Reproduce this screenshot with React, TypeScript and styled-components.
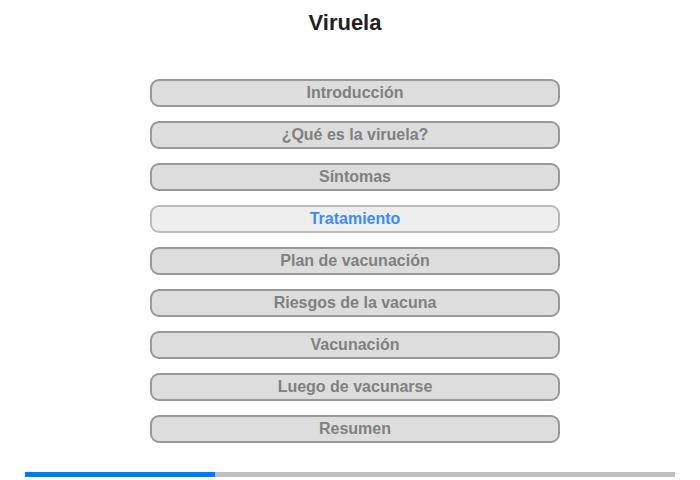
import React from 'react'
import styled, { createGlobalStyle } from 'styled-components'

const GlobalStyle = createGlobalStyle`
  html, body {
    margin: 0;
    padding: 0;
    background: #fff;
    font-family: "Liberation Sans", Arial, sans-serif;
  }
`

const sections = [
  'Introducción',
  '¿Qué es la viruela?',
  'Síntomas',
  'Tratamiento',
  'Plan de vacunación',
  'Riesgos de la vacuna',
  'Vacunación',
  'Luego de vacunarse',
  'Resumen',
]

const activeIndex = 3
const progress = 190 / 650

const App: React.FC = () => {
  return (
    <Page>
      <GlobalStyle />
      <Title>Viruela</Title>
      <Menu>
        {sections.map((label, i) => (
          <MenuButton key={label} active={i === activeIndex}>
            {label}
          </MenuButton>
        ))}
      </Menu>
      <ProgressTrack>
        <ProgressFill style={{ width: `${progress * 100}%` }} />
      </ProgressTrack>
    </Page>
  )
}

const Page = styled.div`
  width: 700px;
  height: 480px;
  display: flex;
  flex-direction: column;
  align-items: center;
  box-sizing: border-box;
  padding-top: 10px;
`

const Title = styled.h1`
  margin: 0 0 0 -10px;
  font-size: 22px;
  line-height: 25px;
  font-weight: bold;
  color: #222;
`

const Menu = styled.div`
  margin-top: 44px;
  margin-left: 10px;
  display: flex;
  flex-direction: column;
  gap: 14px;
`

const MenuButton = styled.button<{ active: boolean }>`
  width: 410px;
  height: 28px;
  box-sizing: border-box;
  padding: 0 0 1px;
  border: 2px solid ${({ active }) => (active ? '#bbb' : '#999')};
  border-radius: 9px;
  background: ${({ active }) => (active ? '#eee' : '#ddd')};
  color: ${({ active }) => (active ? '#3a8cff' : '#808080')};
  font-family: "Liberation Sans", Arial, sans-serif;
  font-size: 16px;
  font-weight: bold;
  line-height: 20px;
  cursor: pointer;
`

const ProgressTrack = styled.div`
  margin-top: 29px;
  width: 650px;
  height: 5px;
  background: #c0c0c0;
`

const ProgressFill = styled.div`
  height: 100%;
  background: #007bff;
`

export default App
